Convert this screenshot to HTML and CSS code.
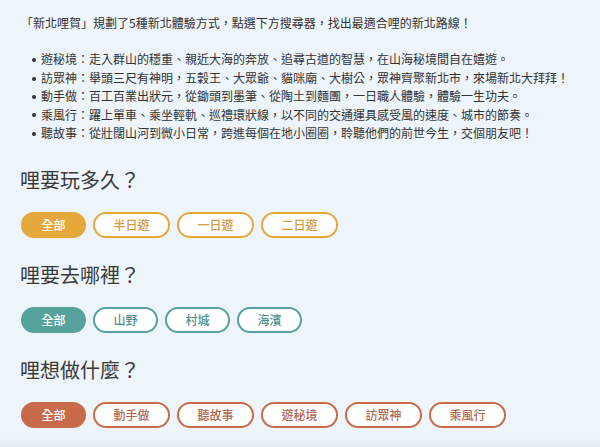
FILE: index.html
```html
<!DOCTYPE html>
<html lang="zh-Hant">
<head>
<meta charset="utf-8">
<title>新北哩賀 路線搜尋</title>
<link rel="stylesheet" href="styles.css">
</head>
<body>
<main class="finder">
  <p class="intro">「新北哩賀」規劃了5種新北體驗方式，點選下方搜尋器，找出最適合哩的新北路線！</p>
  <ul class="modes">
    <li>遊秘境：走入群山的穩重、親近大海的奔放、追尋古道的智慧，在山海秘境間自在嬉遊。</li>
    <li>訪眾神：舉頭三尺有神明，五穀王、大眾爺、貓咪廟、大樹公，眾神齊聚新北市，來場新北大拜拜！</li>
    <li>動手做：百工百業出狀元，從鋤頭到墨筆、從陶土到麵團，一日職人體驗，體驗一生功夫。</li>
    <li>乘風行：躍上單車、乘坐輕軌、巡禮環狀線，以不同的交通運具感受風的速度、城市的節奏。</li>
    <li>聽故事：從壯闊山河到微小日常，跨進每個在地小圈圈，聆聽他們的前世今生，交個朋友吧！</li>
  </ul>

  <section class="filter filter-time">
    <h2 class="filter-title">哩要玩多久？</h2>
    <div class="chips">
      <button class="chip active">全部</button>
      <button class="chip">半日遊</button>
      <button class="chip">一日遊</button>
      <button class="chip">二日遊</button>
    </div>
  </section>

  <section class="filter filter-place">
    <h2 class="filter-title">哩要去哪裡？</h2>
    <div class="chips">
      <button class="chip active">全部</button>
      <button class="chip">山野</button>
      <button class="chip">村城</button>
      <button class="chip">海濱</button>
    </div>
  </section>

  <section class="filter filter-theme">
    <h2 class="filter-title">哩想做什麼？</h2>
    <div class="chips">
      <button class="chip active">全部</button>
      <button class="chip">動手做</button>
      <button class="chip">聽故事</button>
      <button class="chip">遊秘境</button>
      <button class="chip">訪眾神</button>
      <button class="chip">乘風行</button>
    </div>
  </section>
</main>
</body>
</html>
```

FILE: styles.css
```css
html {
  background: #edf4fa;
}

body {
  margin: 0;
  min-height: 447px;
  background: linear-gradient(to bottom, #edf4fa 0, #edf4fa calc(100% - 9px), #e4ebf0 100%);
  font-family: "Noto Sans CJK TC", "Noto Sans", sans-serif;
  color: #333;
}

.finder {
  padding: 14px 20px 0 20px;
}

.intro {
  margin: 0 0 18px 0;
  padding-left: 1px;
  font-size: 12px;
  line-height: 18.4px;
  color: #333;
}

.modes {
  margin: 0;
  padding-left: 12px;
  list-style: none;
  font-size: 12px;
  line-height: 18.4px;
  color: #333;
}

/* small round bullet drawn before each mode */
.modes li::before {
  content: "";
  display: inline-block;
  width: 4px;
  height: 4px;
  margin-right: 5px;
  border-radius: 50%;
  background: #333;
  vertical-align: middle;
  position: relative;
  top: -1px;
}

.filter {
  margin-top: 22px;
}

.filter-time {
  margin-top: 23px;
}

.filter-title {
  margin: 0 0 17px 0;
  font-size: 20px;
  line-height: 30px;
  font-weight: 400;
  color: #3a3a3a;
}

.chips {
  display: flex;
  gap: 7px;
  padding-left: 1px;
}

.chip {
  height: 26px;
  padding: 0 18.5px;
  border: 2px solid var(--accent);
  border-radius: 13px;
  background: #fff;
  color: var(--ink);
  font-family: "Noto Sans CJK TC", "Noto Sans", sans-serif;
  font-size: 12px;
  line-height: 22px;
  font-weight: 500;
  cursor: pointer;
}

.chip.active {
  background: var(--accent);
  color: #fff;
}

.filter-time {
  --accent: #e5a93b;
  --ink: #d39a3e;
}

.filter-place {
  --accent: #58a29e;
  --ink: #4f918d;
}

.filter-theme {
  --accent: #c96a4a;
  --ink: #ad6a53;
}
```
